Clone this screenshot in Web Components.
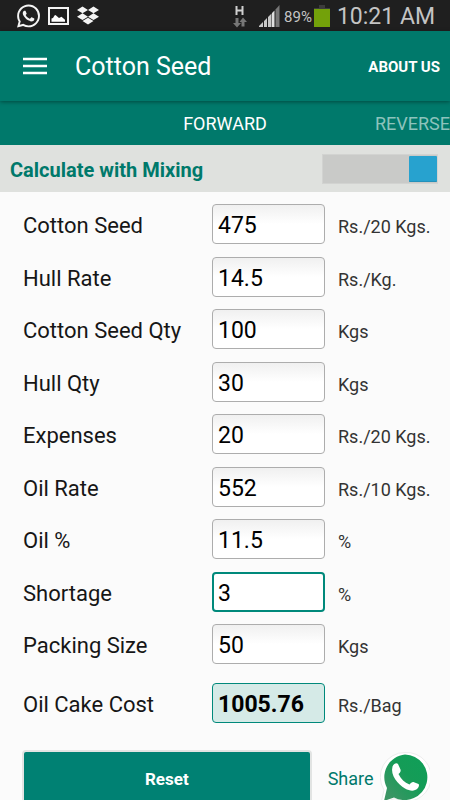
<!DOCTYPE html>
<html lang="en">
<head>
<meta charset="utf-8">
<meta name="viewport" content="width=device-width, initial-scale=1">
<title>Cotton Seed</title>
<style>
  html, body { margin: 0; height: 100%; }
  body { font-family: Roboto, "Liberation Sans", sans-serif; background: #fbfbfb; color: #161616; overflow: hidden; }
</style>
</head>
<body>
<seed-app></seed-app>

<script>
const define = (name, html, setup) => {
  const template = document.createElement('template');
  template.innerHTML = html;
  customElements.define(name, class extends HTMLElement {
    constructor() {
      super();
      this.attachShadow({ mode: 'open' }).append(template.content.cloneNode(true));
    }
    connectedCallback() { if (setup) setup(this, this.shadowRoot); }
  });
};

define('status-bar', `
  <style>
    :host { display: flex; align-items: center; justify-content: space-between; height: 31px; box-sizing: border-box; padding: 0 15px 0 17px; background: #1f1f1f; color: #c4c4c4; }
    div { display: flex; align-items: center; }
    .left { gap: 8px; }
    .net { margin-right: 12px; }
    .bars { margin-right: 4px; }
    .pct { font-size: 15px; padding-top: 2px; }
    .bat { margin: 0 7px 0 2px; }
    .time { font-size: 23px; line-height: 28px; padding-top: 2px; }
    svg { display: block; }
  </style>
  <div class="left">
    <svg width="23" height="24" viewBox="0 0 24 24" fill="#f4f4f4" aria-label="WhatsApp"><path d="M17.472 14.382c-.297-.149-1.758-.867-2.03-.967-.273-.099-.471-.148-.67.15-.197.297-.767.966-.94 1.164-.173.199-.347.223-.644.075-.297-.15-1.255-.463-2.39-1.475-.883-.788-1.48-1.761-1.653-2.059-.173-.297-.018-.458.13-.606.134-.133.298-.347.446-.52.149-.174.198-.298.298-.497.099-.198.05-.371-.025-.52-.075-.149-.669-1.612-.916-2.207-.242-.579-.487-.5-.669-.51-.173-.008-.371-.01-.57-.01-.198 0-.52.074-.792.372-.272.297-1.04 1.016-1.04 2.479 0 1.462 1.065 2.875 1.213 3.074.149.198 2.096 3.2 5.077 4.487.709.306 1.262.489 1.694.625.712.227 1.36.195 1.871.118.571-.085 1.758-.719 2.006-1.413.248-.694.248-1.289.173-1.413-.074-.124-.272-.198-.57-.347m-5.421 7.403h-.004a9.87 9.87 0 01-5.031-1.378l-.361-.214-3.741.982.998-3.648-.235-.374a9.86 9.86 0 01-1.51-5.26c.001-5.45 4.436-9.884 9.888-9.884 2.64 0 5.122 1.03 6.988 2.898a9.825 9.825 0 012.893 6.994c-.003 5.45-4.437 9.884-9.885 9.884m8.413-18.297A11.815 11.815 0 0012.05 0C5.495 0 .16 5.335.157 11.892c0 2.096.547 4.142 1.588 5.945L.057 24l6.305-1.654a11.882 11.882 0 005.683 1.448h.005c6.554 0 11.89-5.335 11.893-11.893a11.821 11.821 0 00-3.48-8.413Z"/></svg>
    <svg width="21" height="18" viewBox="0 0 21 18" aria-label="Picture"><rect x="1" y="1" width="19" height="16" fill="none" stroke="#f4f4f4" stroke-width="2"/><path d="M3.500 14.800V11.500l1.500-.5 1.500-2.500 1-.5 3.500 3 2.500-1.200 3.500 3v2z" fill="#fff"/></svg>
    <svg width="22" height="21" viewBox="0 0 24 24" preserveAspectRatio="none" fill="#f4f4f4" aria-label="Dropbox"><path d="M6 1.800L0 5.600l6 3.800 6-3.800zM18 1.800l-6 3.800 6 3.800 6-3.800zM0 13.300l6 3.800 6-3.800-6-3.900zM18 9.400l-6 3.900 6 3.800 6-3.800zM6 18.400l6 3.800 6-3.800-6-3.800z"/></svg>
  </div>
  <div>
    <svg class="net" width="14" height="24" viewBox="0 0 14 24" aria-label="HSPA"><path d="M3.500 2v9M9.500 2v9M3.500 6.500H10" stroke="#d0d0d0" stroke-width="2" fill="none"/><path d="M2.500 14h3v5H8l-4 4.500-4-4.500h2.500zM8.500 22.500h3V18H14l-4-4.500L6.500 18h2z" fill="#777"/></svg>
    <svg class="bars" width="21" height="22" viewBox="0 0 21 22" aria-label="Signal"><path d="M0 22v-1l4-4v5zM5 22v-6l3-3v9zM9 22V12l3.500-3.500V22z" fill="#c8c8c8"/><path d="M13 22V8l2.500-2.500V22z" fill="#e0e0e0"/><path d="M16.500 22V4.500L20.500 0v22z" fill="#777"/></svg>
    <span class="pct">89%</span>
    <svg class="bat" width="16" height="22" viewBox="0 0 16 22" aria-label="Battery"><path d="M5 0h6v3h5v2H0V3h5z" fill="#3c3c3c"/><path d="M0 4h16v18H0z" fill="#73a10a"/></svg>
    <span class="time">10:21 AM</span>
  </div>`);

define('app-bar', `
  <style>
    :host { display: flex; align-items: center; height: 70px; box-sizing: border-box; padding: 2px 10px 0 23px; background: #00796b; color: #fff; box-shadow: 0 1px 4px #0006; position: relative; }
    button { all: unset; display: block; cursor: pointer; }
    svg { display: block; }
    h1 { flex: 1; margin: 0 0 0 28px; font-size: 25px; line-height: 32px; font-weight: 400; }
    a { color: inherit; text-decoration: none; font-size: 15px; font-weight: 700; }
  </style>
  <button aria-label="Menu"><svg width="24" height="20" viewBox="0 0 24 20"><path d="M0 2h24M0 9h24M0 16h24" stroke="#fff" stroke-width="2.600"/></svg></button>
  <h1><slot></slot></h1>
  <a href="#about">ABOUT US</a>`);

define('tab-strip', `
  <style>
    :host { display: grid; grid-template-columns: 1fr auto 1fr; align-items: center; height: 44px; box-sizing: border-box; padding-top: 2px; background: #00796b; }
    button { all: unset; cursor: pointer; font-size: 18px; line-height: 24px; color: #fff; grid-column: 2; }
    .next { grid-column: 3; justify-self: end; color: #8dc3bc; }
  </style>
  <button>FORWARD</button><button class="next">REVERSE</button>`);

define('mix-toggle', `
  <style>
    :host { display: flex; align-items: center; justify-content: space-between; height: 47px; box-sizing: border-box; padding: 0 12px 0 10px; background: #dfe1de; }
    label { font-size: 20px; line-height: 26px; padding-top: 2px; font-weight: 700; color: #00796b; }
    input { appearance: none; margin: 0; width: 116px; height: 30px; padding: 1px 0; box-sizing: border-box; display: flex; background: #c9cac8; border: 1px solid #d2d3d1; }
    input::before { content: ""; width: 28px; background: #27a2cf; border: solid #2391bb; border-width: 0 0 1px; border-radius: 1px; box-sizing: border-box; }
    input:checked { justify-content: flex-end; }
  </style>
  <label for="mix"><slot></slot></label>
  <input id="mix" type="checkbox" role="switch" checked>`);

define('rate-field', `
  <style>
    :host { display: grid; grid-template-columns: 189fr 113fr 125fr; align-items: baseline; }
    label { font-size: 22px; line-height: 28px; white-space: nowrap; }
    input { width: 100%; height: 40px; box-sizing: border-box; margin: 0; padding: 3px 5px 0; border: 1px solid #adadad; border-radius: 4px; background: linear-gradient(#f0f0f0, #fff 50%); color: #000; font: 23px Roboto, "Liberation Sans", sans-serif; outline: none; }
    .unit { padding-left: 13px; font-size: 18px; line-height: 24px; color: #333; white-space: nowrap; }
    :host([active]) input { border: 2px solid #00897b; padding: 3px 4px 0; background: #fff; }
    :host([result]) input { border-color: #00897b; background: #d5eae7; font-weight: 700; }
  </style>
  <label for="field"><slot></slot></label>
  <input id="field" type="text" inputmode="decimal">
  <span class="unit"></span>`, (host, root) => {
  const input = root.querySelector('input');
  input.value = host.getAttribute('value');
  input.readOnly = host.hasAttribute('result');
  root.querySelector('.unit').textContent = host.getAttribute('unit');
});

define('action-bar', `
  <style>
    :host { display: grid; grid-template-columns: 289fr 138fr; align-items: start; }
    button { height: 58px; border: 2px solid #e2e4e3; border-radius: 4px; background: #008173; color: #fff; font: 700 17px Roboto, "Liberation Sans", sans-serif; cursor: pointer; }
    a { display: flex; align-items: center; gap: 6px; padding: 1px 0 0 16px; color: #00796b; text-decoration: none; font-size: 18px; line-height: 24px; }
    svg { display: block; }
  </style>
  <button>Reset</button>
  <a href="#share">Share
    <svg width="50" height="56" viewBox="0 0 50 56" aria-hidden="true">
      <defs><linearGradient id="g" x1="0" y1="1" x2="1" y2="0"><stop offset=".1" stop-color="#3c9565"/><stop offset=".55" stop-color="#159c57"/><stop offset="1" stop-color="#0f9f58"/></linearGradient></defs>
      <path d="M25 1.500a24.500 24.500 0 1 1-10 46L1 52l3-13A24.500 24.500 0 0 1 25 1.500z" fill="#fff" stroke="#ededed" stroke-width="1"/>
      <path d="M25 3.500a22.800 22.800 0 1 1-11 43L4 50l3-13A22.800 22.800 0 0 1 25 3.500z" fill="url(#g)"/>
      <path d="M12.500 15.500c1.500-3 4-4 5.500-2.500l2.500 5.500c.6 1.500-.2 3-2 4.500 2.500 5 6 8.500 11 10.500 1.500-1.700 3-3 4.500-2.200l4.500 1.700c1 .5.500 3-1 4.500-3 3-7.500 2.700-12.500 0-7-4-15-13.500-12.500-22z" fill="#fff"/>
    </svg>
  </a>`);

define('seed-app', `
  <style>
    :host { display: flex; flex-direction: column; height: 100vh; overflow: hidden; }
    main { flex: 1; display: flex; flex-direction: column; justify-content: space-between; padding: 12px 0 27px 23px; }
    rate-field[result] { margin-top: 6px; }
    action-bar { height: 50px; padding-left: 22px; }
  </style>
  <status-bar></status-bar>
  <app-bar>Cotton Seed</app-bar>
  <tab-strip></tab-strip>
  <mix-toggle>Calculate with Mixing</mix-toggle>
  <main>
    <rate-field value="475" unit="Rs./20 Kgs.">Cotton Seed</rate-field>
    <rate-field value="14.5" unit="Rs./Kg.">Hull Rate</rate-field>
    <rate-field value="100" unit="Kgs">Cotton Seed Qty</rate-field>
    <rate-field value="30" unit="Kgs">Hull Qty</rate-field>
    <rate-field value="20" unit="Rs./20 Kgs.">Expenses</rate-field>
    <rate-field value="552" unit="Rs./10 Kgs.">Oil Rate</rate-field>
    <rate-field value="11.5" unit="%">Oil %</rate-field>
    <rate-field value="3" unit="%" active>Shortage</rate-field>
    <rate-field value="50" unit="Kgs">Packing Size</rate-field>
    <rate-field value="1005.76" unit="Rs./Bag" result>Oil Cake Cost</rate-field>
  </main>
  <action-bar></action-bar>`);
</script>
</body>
</html>
